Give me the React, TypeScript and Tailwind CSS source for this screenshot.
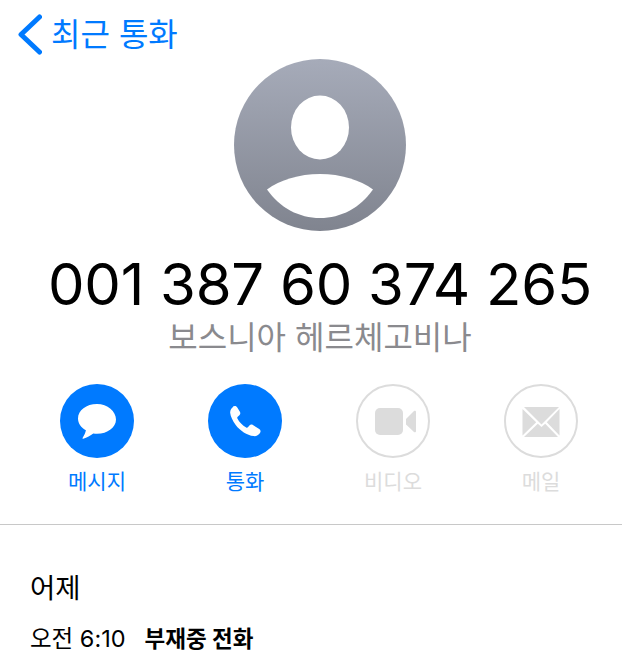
const font = "font-['Inter','Noto_Sans_CJK_KR',sans-serif]";

function MessageIcon() {
  return (
    <svg viewBox="0 0 74 74" className="w-[74px] h-[74px]">
      <circle cx="37" cy="37" r="37" fill="#007aff" />
      <path
        d="M37 20c-10.600 0-19 6.400-19 14.400 0 4.900 3.100 9.200 7.900 11.800-.4 2.300-1.600 5-3.200 7.500-.4.600-.1 1.200.6 1 3.600-1 7.200-3.100 10-5.300 1.300.2 2.400.3 3.700.3 10.600 0 19-6.400 19-14.300S47.600 20 37 20z"
        fill="#fff"
      />
    </svg>
  );
}

function PhoneIcon() {
  return (
    <svg viewBox="0 0 74 74" className="w-[74px] h-[74px]">
      <circle cx="37" cy="37" r="37" fill="#007aff" />
      <path
        d="M25 22.500c1.500-1 3.200-.6 4.100.8l2.800 4.500c.7 1.200.5 2.600-.5 3.500l-1.700 1.500c-.5.500-.6 1.100-.3 1.700 1.900 3.700 5 6.900 8.800 9 .6.300 1.300.2 1.700-.3l1.500-1.700c.9-1 2.300-1.200 3.500-.5l6.300 3.900c1.400.9 1.800 2.700.8 4-1.500 2.100-3.800 3.600-6.300 3.200-6.900-1.100-13.500-5.300-18-11.200-3.200-4.200-5.100-8.500-5.500-11.800-.3-2.500 1.100-4.700 2.800-6.100z"
        fill="#fff"
      />
    </svg>
  );
}

function VideoIcon() {
  return (
    <svg viewBox="0 0 74 74" className="w-[74px] h-[74px]">
      <circle cx="37" cy="37" r="36" fill="none" stroke="#dcdcdc" strokeWidth="2" />
      <rect x="19" y="24" width="28" height="27" rx="5" fill="#dcdcdc" />
      <path d="M50 35l8-8c.9-.7 2-.2 2 .9v19.200c0 1.100-1.100 1.600-2 .9l-8-7.500z" fill="#dcdcdc" />
    </svg>
  );
}

function MailIcon() {
  return (
    <svg viewBox="0 0 74 74" className="w-[74px] h-[74px]">
      <circle cx="37" cy="37" r="36" fill="none" stroke="#dcdcdc" strokeWidth="2" />
      <path d="M20 23h35L37.500 40.500z" fill="#dcdcdc" />
      <path d="M18.500 25v26.500l13.700-13.200zM55.500 25v26.500L42.800 38.300z" fill="#dcdcdc" />
      <path d="M20 53l13.800-13.300 3.700 3.300 3.700-3.300L54 53z" fill="#dcdcdc" />
    </svg>
  );
}

function Avatar() {
  return (
    <svg viewBox="0 0 172 172" className="w-[172px] h-[172px]">
      <defs>
        <linearGradient id="avatarFill" x1="0" y1="0" x2="0" y2="1">
          <stop offset="0%" stopColor="#a6abb9" />
          <stop offset="100%" stopColor="#80848f" />
        </linearGradient>
      </defs>
      <circle cx="86" cy="86" r="86" fill="url(#avatarFill)" />
      <ellipse cx="86" cy="68.500" rx="29" ry="32" fill="#fff" />
      <path d="M33 130.500C46 121 65 115 86 115s40 6 53 15.500C126 149 107 159 86 159s-40-10-53-28.500z" fill="#fff" />
    </svg>
  );
}

const actions = [
  { label: '메시지', icon: <MessageIcon />, color: 'text-[#007aff]' },
  { label: '통화', icon: <PhoneIcon />, color: 'text-[#007aff]' },
  { label: '비디오', icon: <VideoIcon />, color: 'text-[#dcdcdc]' },
  { label: '메일', icon: <MailIcon />, color: 'text-[#dcdcdc]' },
];

export default function App() {
  return (
    <div className={`${font} w-[622px] h-[652px] overflow-hidden bg-white text-black`}>
      <div className="flex items-center h-[69px] pl-[18px] text-[#007aff]">
        <svg viewBox="0 0 24 41" className="w-[24px] h-[41px]">
          <path d="M21.500 3L3 20.500 21.500 38" fill="none" stroke="#007aff" strokeWidth="5" strokeLinecap="round" strokeLinejoin="round" />
        </svg>
        <span className="ml-[9px] text-[32px] leading-none">최근 통화</span>
      </div>

      <div className="w-[640px] flex flex-col items-center">
        <div className="mt-[-10px]">
          <Avatar />
        </div>
        <div className="mt-[17px] text-[58px] leading-[72px] tracking-[-0.25px] whitespace-nowrap">001 387 60 374 265</div>
        <div className="text-[32px] leading-[36px] text-[#8a8a8e]">보스니아 헤르체고비나</div>
      </div>

      <div className="grid grid-cols-[repeat(4,148px)] px-[23px] mt-[28px]">
        {actions.map((a) => (
          <div key={a.label} className="flex flex-col items-center">
            {a.icon}
            <span className={`${a.color} mt-[10px] text-[21px] leading-[28px]`}>{a.label}</span>
          </div>
        ))}
      </div>

      <div className="mt-[28px] h-px bg-[#c8c8c8]" />

      <div className="px-[30px] pt-[45px]">
        <div className="text-[27.500px] leading-[36px]">어제</div>
        <div className="mt-[21px] flex items-center leading-[24px] whitespace-nowrap">
          <span className="text-[23.500px]">오전 6:10</span>
          <span className="ml-[19px] text-[22.500px] font-bold">부재중 전화</span>
        </div>
      </div>
    </div>
  );
}
